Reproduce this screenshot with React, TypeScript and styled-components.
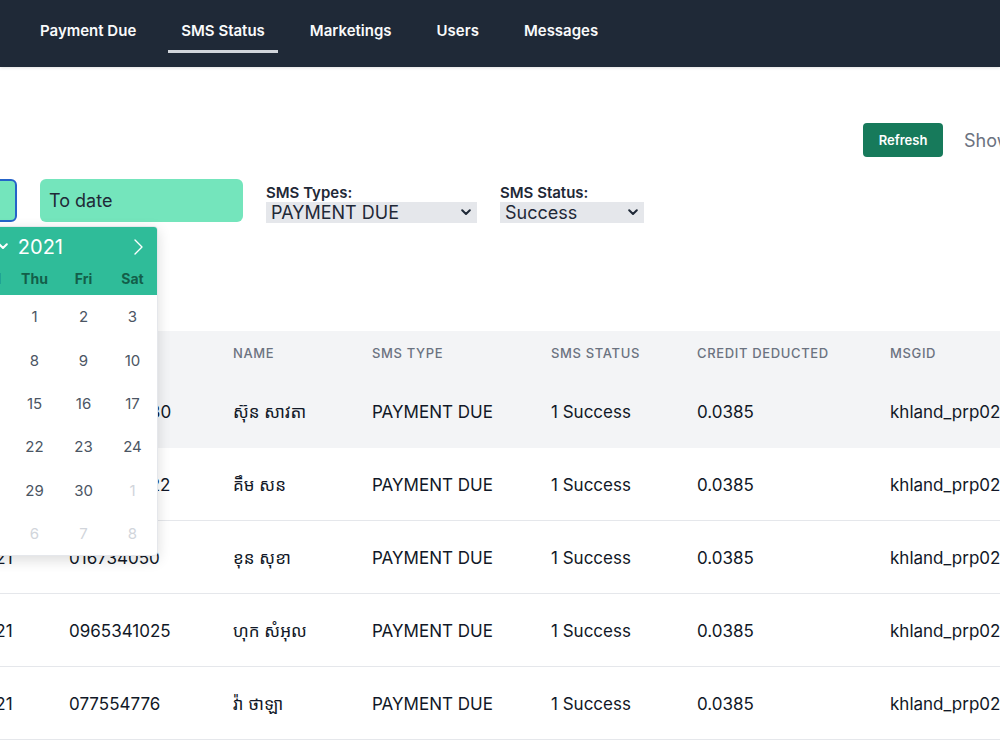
import React from "react";
import styled, { createGlobalStyle, css } from "styled-components";

const GlobalStyle = createGlobalStyle`
  html, body {
    margin: 0;
    padding: 0;
    background: #ffffff;
  }
  body {
    font-family: Inter, "Noto Sans Khmer", "Khmer OS", "Noto Sans", sans-serif;
    color: #111827;
    overflow: hidden;
  }
`;

const Shell = styled.div`
  width: 1000px;
  height: 750px;
  overflow: hidden;
`;

const NavBar = styled.nav`
  height: 67px;
  box-sizing: border-box;
  background: #1f2937;
  display: flex;
  align-items: flex-start;
  gap: 19px;
  padding-left: 27px;
  box-shadow: 0 1px 3px rgba(0, 0, 0, 0.12);
`;

const NavItem = styled.a<{ $active?: boolean }>`
  margin-top: 10px;
  height: 43px;
  box-sizing: border-box;
  padding: 0 13px;
  display: flex;
  align-items: center;
  font-size: 15px;
  font-weight: 600;
  color: #f9fafb;
  border-bottom: 3px solid ${(p) => (p.$active ? "#d1d5db" : "transparent")};
  cursor: pointer;
`;

/* the page is scrolled sideways, so its left part lies off screen */
const Page = styled.main`
  margin-left: -226px;
  width: 1500px;
`;

const Toolbar = styled.div`
  margin-top: 56px;
  padding-left: 1089px;
  display: flex;
  align-items: center;
  gap: 21px;
`;

const RefreshButton = styled.button`
  width: 80px;
  height: 34px;
  border: none;
  border-radius: 4px;
  background: #177a5b;
  color: #ffffff;
  font-family: inherit;
  font-size: 13px;
  font-weight: 600;
  cursor: pointer;
`;

const ShowText = styled.span`
  font-size: 18px;
  color: #6b7280;
`;

const Filters = styled.div`
  margin-top: 22px;
  padding-left: 40px;
  display: flex;
  align-items: flex-start;
  gap: 23px;
`;

const DateField = styled.div`
  position: relative;
`;

const DateInput = styled.div<{ $focused?: boolean }>`
  width: 203px;
  height: 43px;
  box-sizing: border-box;
  display: flex;
  align-items: center;
  padding-left: 7px;
  border-radius: 6px;
  background: #74e5bc;
  border: 2px solid transparent;
  font-size: 18px;
  color: #1f2937;
  ${(p) =>
    p.$focused &&
    css`
      border-color: #2563c9;
    `}
`;

const FilterGroup = styled.div`
  display: flex;
  flex-direction: column;
`;

const FilterLabel = styled.label`
  padding-top: 4px;
  line-height: 19px;
  font-size: 15px;
  font-weight: 600;
  color: #1f2937;
`;

const SelectBox = styled.div<{ $width: number }>`
  width: ${(p) => p.$width}px;
  height: 21px;
  box-sizing: border-box;
  display: flex;
  align-items: center;
  justify-content: space-between;
  padding: 0 6px 0 5px;
  background: #e5e7eb;
  font-size: 18px;
  color: #1f2937;
`;

const Calendar = styled.div`
  position: absolute;
  top: 47px;
  left: -1px;
  z-index: 10;
  width: 343px;
  background: #ffffff;
  border: 1px solid #e5e7eb;
  border-radius: 4px;
  box-shadow: 0 4px 14px rgba(0, 0, 0, 0.14);
  overflow: hidden;
`;

const CalendarHead = styled.div`
  background: #2fbc99;
  padding-bottom: 5px;
`;

const TitleRow = styled.div`
  height: 39px;
  display: flex;
  align-items: center;
  padding: 0 14px;
  color: #ffffff;
`;

const MonthYear = styled.div`
  flex: 1;
  display: flex;
  align-items: center;
  justify-content: flex-end;
  gap: 8px;
  padding-right: 71px;
  font-size: 20px;
`;

const Year = styled.span`
  margin-left: 2px;
`;

const WeekGrid = styled.div`
  display: grid;
  grid-template-columns: repeat(7, 49px);
`;

const DayName = styled.div`
  height: 24px;
  display: flex;
  align-items: center;
  justify-content: center;
  font-size: 14px;
  font-weight: 700;
  color: #135e49;
`;

const DayCell = styled.div<{ $muted?: boolean }>`
  height: 43.4px;
  display: flex;
  align-items: center;
  justify-content: center;
  font-size: 15px;
  color: ${(p) => (p.$muted ? "#d1d5db" : "#4b5563")};
`;

const TableWrap = styled.div`
  margin-top: 108px;
  padding-left: 125px;
`;

const Table = styled.table`
  width: 1368px;
  border-collapse: collapse;
  table-layout: fixed;
`;

const Th = styled.th`
  height: 44px;
  padding: 0 24px;
  text-align: left;
  background: #f3f4f6;
  font-size: 13px;
  font-weight: 500;
  letter-spacing: 0.05em;
  color: #6b7280;
  white-space: nowrap;
`;

const Td = styled.td<{ $active?: boolean }>`
  height: 71px;
  padding: 1px 24px 0;
  font-size: 17px;
  color: #111827;
  background: #ffffff;
  border-bottom: 1px solid #e5e7eb;
  white-space: nowrap;
  ${(p) =>
    p.$active &&
    css`
      position: relative;
      z-index: 1;
      background: #f3f4f6;
      border-bottom-color: #f3f4f6;
      box-shadow: 0 10px 12px -6px rgba(0, 0, 0, 0.12);
    `}
`;

const ChevronDown = ({ color = "#1f2937" }: { color?: string }) => (
  <svg width="10" height="7" viewBox="0 0 10 7">
    <path d="M1.2 1.2L5 5l3.8-3.8" fill="none" stroke={color} strokeWidth="2" strokeLinecap="round" strokeLinejoin="round" />
  </svg>
);

const Arrow = ({ dir }: { dir: "left" | "right" }) => (
  <svg width="9" height="16" viewBox="0 0 9 16">
    <path
      d={dir === "right" ? "M1 1l7 7-7 7" : "M8 1L1 8l7 7"}
      fill="none"
      stroke="#ffffff"
      strokeWidth="1.4"
      strokeLinecap="round"
      strokeLinejoin="round"
    />
  </svg>
);

const dayNames = ["Sun", "Mon", "Tue", "Wed", "Thu", "Fri", "Sat"];

const calendarDays: { d: number; muted?: boolean }[] = [
  ...[28, 29, 30, 31].map((d) => ({ d, muted: true })),
  ...Array.from({ length: 30 }, (_, i) => ({ d: i + 1 })),
  ...[1, 2, 3, 4, 5, 6, 7, 8].map((d) => ({ d, muted: true })),
];

const rows = [
  { date: "21/04/2021", phone: "0963514530", name: "ស៊ុន សាវតា" },
  { date: "21/04/2021", phone: "0928834122", name: "គឹម សន" },
  { date: "21/04/2021", phone: "016734050", name: "ខុន សុខា" },
  { date: "21/04/2021", phone: "0965341025", name: "ហុក សំអុល" },
  { date: "21/04/2021", phone: "077554776", name: "វ៉ា ថាឡា" },
];

export default function App() {
  return (
    <Shell>
      <GlobalStyle />
      <NavBar>
        <NavItem>Payment Due</NavItem>
        <NavItem $active>SMS Status</NavItem>
        <NavItem>Marketings</NavItem>
        <NavItem>Users</NavItem>
        <NavItem>Messages</NavItem>
      </NavBar>

      <Page>
        <Toolbar>
          <RefreshButton>Refresh</RefreshButton>
          <ShowText>Show 10 entries</ShowText>
        </Toolbar>

        <Filters>
          <DateField>
            <DateInput $focused>From date</DateInput>
            <Calendar>
              <CalendarHead>
                <TitleRow>
                  <Arrow dir="left" />
                  <MonthYear>
                    <span>April</span>
                    <ChevronDown color="#ffffff" />
                    <Year>2021</Year>
                  </MonthYear>
                  <Arrow dir="right" />
                </TitleRow>
                <WeekGrid>
                  {dayNames.map((n) => (
                    <DayName key={n}>{n}</DayName>
                  ))}
                </WeekGrid>
              </CalendarHead>
              <WeekGrid>
                {calendarDays.map((c, i) => (
                  <DayCell key={i} $muted={c.muted}>
                    {c.d}
                  </DayCell>
                ))}
              </WeekGrid>
            </Calendar>
          </DateField>
          <DateInput>To date</DateInput>
          <FilterGroup>
            <FilterLabel>SMS Types:</FilterLabel>
            <SelectBox $width={211}>
              <span>PAYMENT DUE</span>
              <ChevronDown />
            </SelectBox>
          </FilterGroup>
          <FilterGroup>
            <FilterLabel>SMS Status:</FilterLabel>
            <SelectBox $width={144}>
              <span>Success</span>
              <ChevronDown />
            </SelectBox>
          </FilterGroup>
        </Filters>

        <TableWrap>
          <Table>
            <colgroup>
              <col style={{ width: 146 }} />
              <col style={{ width: 164 }} />
              <col style={{ width: 139 }} />
              <col style={{ width: 179 }} />
              <col style={{ width: 146 }} />
              <col style={{ width: 193 }} />
              <col style={{ width: 401 }} />
            </colgroup>
            <thead>
              <tr>
                <Th>DATE</Th>
                <Th>PHONE</Th>
                <Th>NAME</Th>
                <Th>SMS TYPE</Th>
                <Th>SMS STATUS</Th>
                <Th>CREDIT DEDUCTED</Th>
                <Th>MSGID</Th>
              </tr>
            </thead>
            <tbody>
              {rows.map((r, i) => {
                const active = i === 0;
                return (
                  <tr key={i}>
                    <Td $active={active}>{r.date}</Td>
                    <Td $active={active}>{r.phone}</Td>
                    <Td $active={active}>{r.name}</Td>
                    <Td $active={active}>PAYMENT DUE</Td>
                    <Td $active={active}>1 Success</Td>
                    <Td $active={active}>0.0385</Td>
                    <Td $active={active}>khland_prp0221042110301</Td>
                  </tr>
                );
              })}
            </tbody>
          </Table>
        </TableWrap>
      </Page>
    </Shell>
  );
}
